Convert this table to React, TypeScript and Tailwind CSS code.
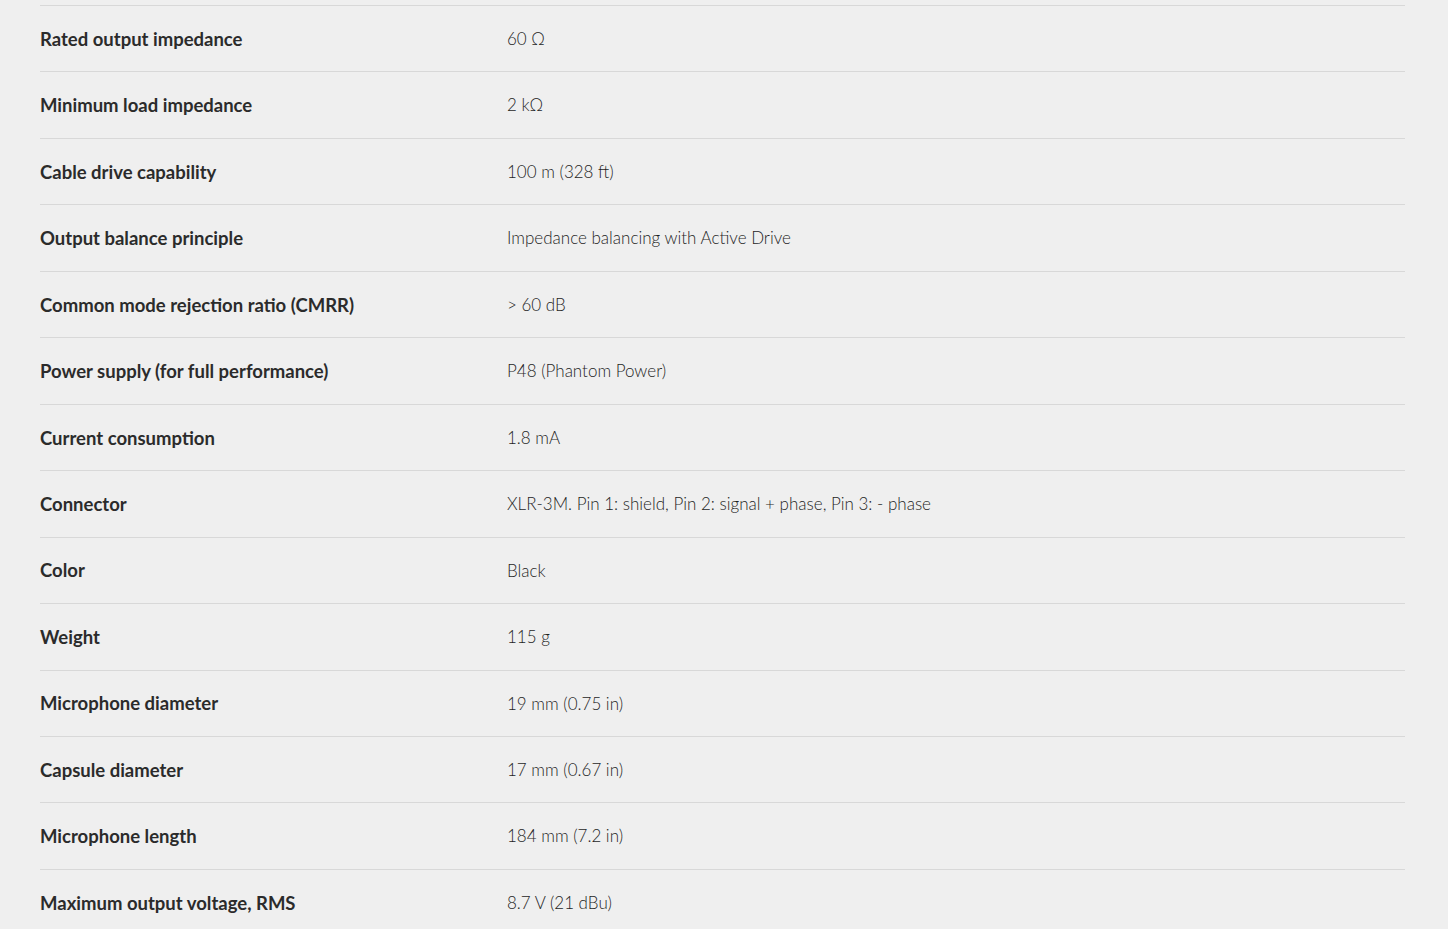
const specs: [string, string][] = [
  ["Rated output impedance", "60 Ω"],
  ["Minimum load impedance", "2 kΩ"],
  ["Cable drive capability", "100 m (328 ft)"],
  ["Output balance principle", "Impedance balancing with Active Drive"],
  ["Common mode rejection ratio (CMRR)", "> 60 dB"],
  ["Power supply (for full performance)", "P48 (Phantom Power)"],
  ["Current consumption", "1.8 mA"],
  ["Connector", "XLR-3M. Pin 1: shield, Pin 2: signal + phase, Pin 3: - phase"],
  ["Color", "Black"],
  ["Weight", "115 g"],
  ["Microphone diameter", "19 mm (0.75 in)"],
  ["Capsule diameter", "17 mm (0.67 in)"],
  ["Microphone length", "184 mm (7.2 in)"],
  ["Maximum output voltage, RMS", "8.7 V (21 dBu)"],
];

const App = () => {
  return (
    <div className="h-[929px] overflow-hidden bg-[#efefef] pt-[5px] font-['Lato','Liberation_Sans',sans-serif]">
      <div className="ml-[40px] w-[1365px]">
        {specs.map(([label, value]) => (
          <div
            key={label}
            className="flex h-[66.46px] items-center border-t border-[#d8d8d8]"
          >
            <div className="w-[467px] shrink-0 pt-[2px] text-[18.5px] font-bold text-[#2b2b2b]">{label}</div>
            <div className="text-[17px] font-light text-[#1f1f1f]">{value}</div>
          </div>
        ))}
      </div>
    </div>
  );
};

export default App;
